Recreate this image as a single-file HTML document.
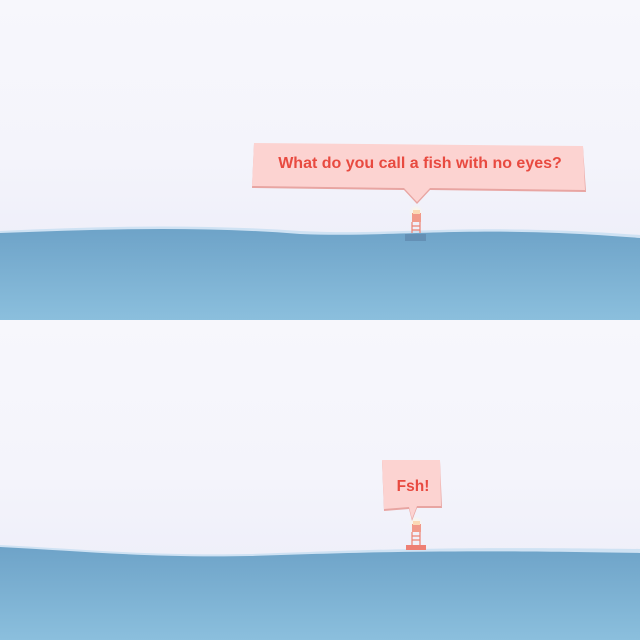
<!DOCTYPE html>
<html><head><style>html,body{margin:0;padding:0;width:640px;height:640px;overflow:hidden}</style></head>
<body>
<svg width="640" height="640" viewBox="0 0 640 640" xmlns="http://www.w3.org/2000/svg">
<defs>
<linearGradient id="sky" x1="0" y1="0" x2="0" y2="1"><stop offset="0" stop-color="#f7f7fc"/><stop offset="0.5" stop-color="#f4f4fb"/><stop offset="1" stop-color="#e9eaf7"/></linearGradient>
<linearGradient id="sea" x1="0" y1="0" x2="0" y2="1"><stop offset="0" stop-color="#6ea3c8"/><stop offset="1" stop-color="#8bbfdd"/></linearGradient>
<radialGradient id="glow"><stop offset="0" stop-color="#fff8e0"/><stop offset="1" stop-color="#fff8e0" stop-opacity="0"/></radialGradient>
</defs>
<rect x="0" y="0" width="640" height="320" fill="url(#sky)"/>
<path d="M0,231 C100,226 200,224 300,231 C400,236 460,222 640,235 L640,320 L0,320Z" fill="#cfe2f3"/>
<path d="M0,233 C100,229 200,226 300,234 C400,238 470,224 640,238 L640,320 L0,320Z" fill="url(#sea)"/>
<rect x="405" y="234" width="21" height="7" fill="#6490b5"/>
<circle cx="416" cy="212" r="7" fill="url(#glow)"/>
<rect x="412" y="213" width="9" height="9" fill="#f19a8a"/>
<rect x="413" y="210" width="7" height="4" fill="#fbd9b5"/>
<path d="M412,222 L412,233 M420,222 L420,233 M412,226 L420,226 M412,230 L420,230" stroke="#ec8273" stroke-width="1.2"/>
<polygon points="254,144 583,147 586,192 430,190 417,204 404,190 252,188" fill="#e8a5a2"/>
<polygon points="254,143 583,146 585,190 430,188 417,202 404,188 252,186" fill="#fcd3d1"/>
<text x="420" y="168" text-anchor="middle" font-family="Liberation Sans, sans-serif" font-weight="bold" font-size="16" fill="#e84a40">What do you call a fish with no eyes?</text>
<rect x="0" y="320" width="640" height="320" fill="url(#sky)"/>
<path d="M0,545 C80,549 150,556 250,554 C350,551 420,546 640,549 L640,640 L0,640Z" fill="#cfe2f3"/>
<path d="M0,547 C80,551 150,558 250,556 C350,553 430,549 640,553 L640,640 L0,640Z" fill="url(#sea)"/>
<circle cx="416" cy="523" r="7" fill="url(#glow)"/>
<rect x="412" y="524" width="9" height="8" fill="#f19a8a"/>
<rect x="413" y="521" width="7" height="4" fill="#fbd9b5"/>
<path d="M412,532 L412,545 M420,532 L420,545 M412,536 L420,536 M412,540 L420,540" stroke="#ec8273" stroke-width="1.2"/>
<rect x="406" y="545" width="20" height="5" fill="#ee7f74"/>
<polygon points="382,461 440,461 442,508 417,508 412,521 409,509 384,511" fill="#e8a5a2"/>
<polygon points="382,460 440,460 441,506 417,506 412,519 409,507 384,509" fill="#fcd3d1"/>
<text x="413" y="491" text-anchor="middle" font-family="Liberation Sans, sans-serif" font-weight="bold" font-size="15.5" fill="#e84a40">Fsh!</text>
</svg>
</body></html>
